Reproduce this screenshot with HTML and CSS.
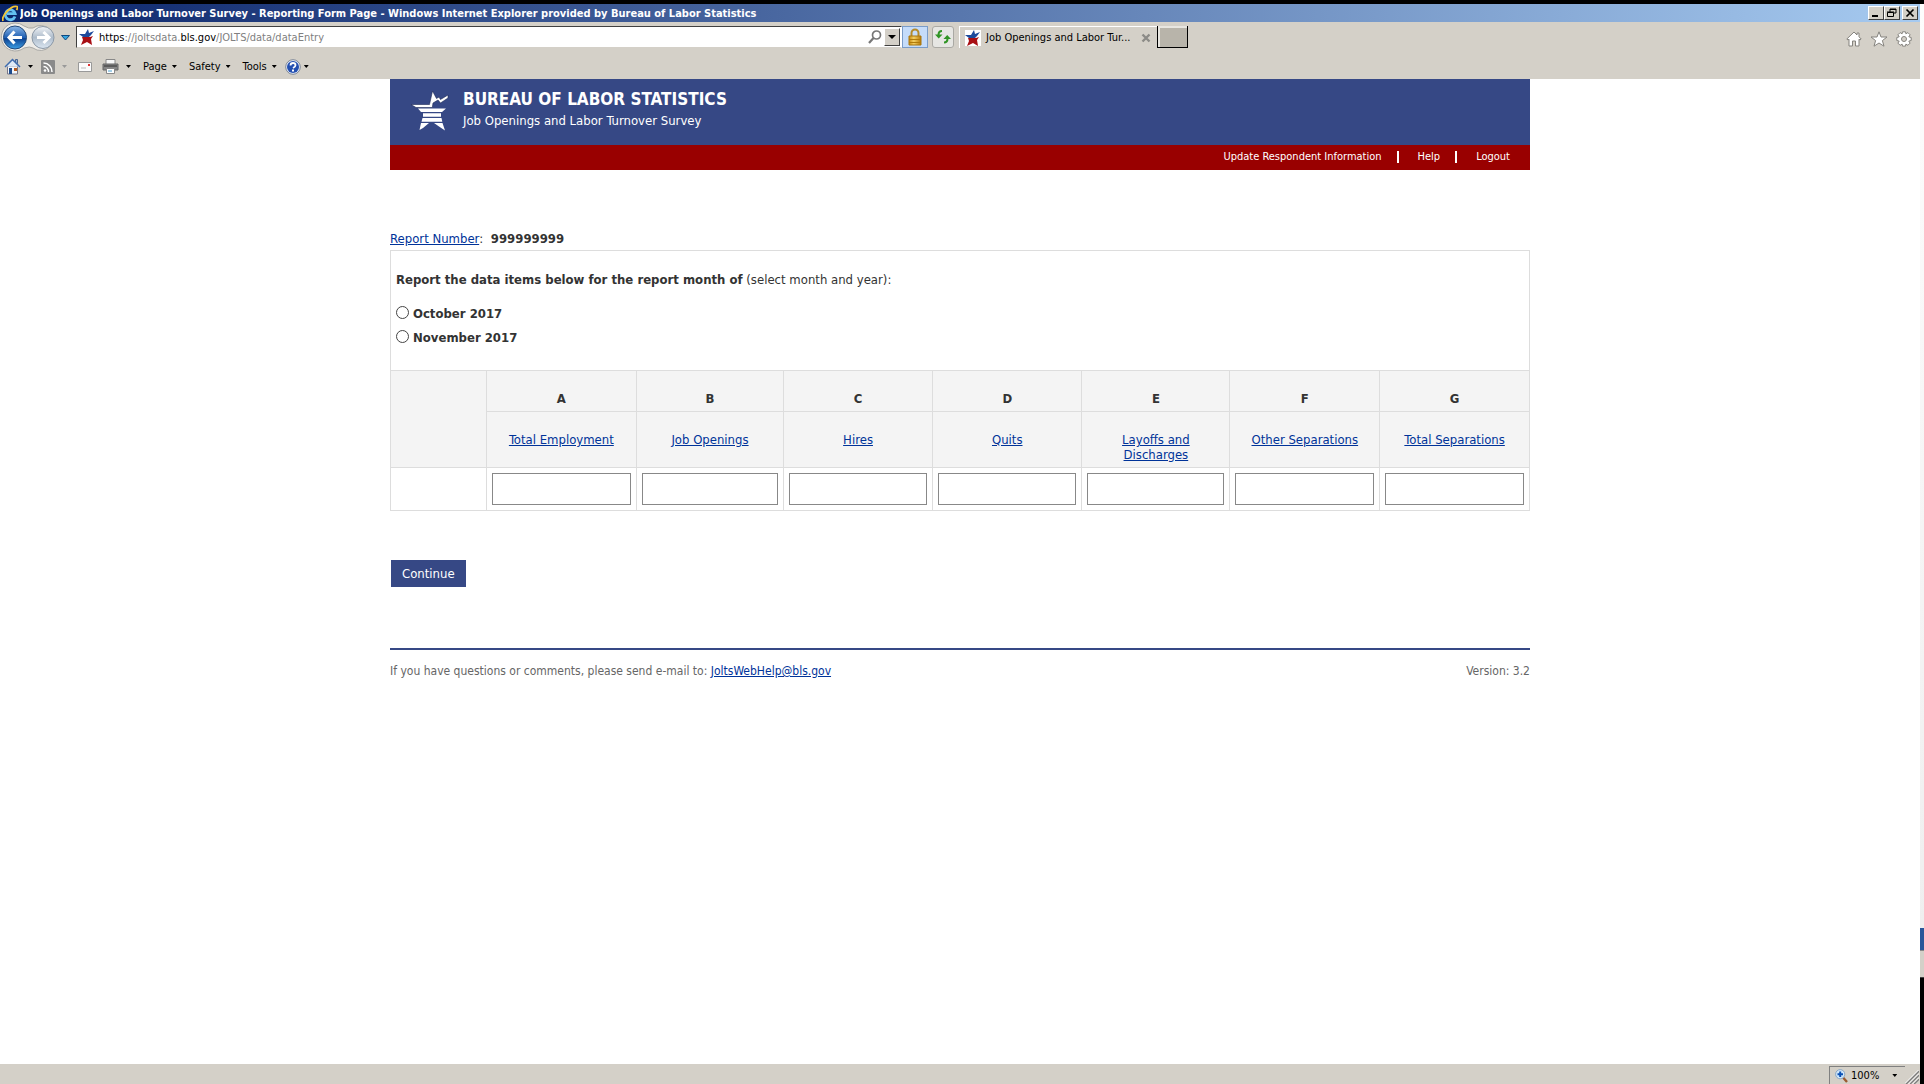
FILE: index.html
```html
<!DOCTYPE html>
<html lang="en">
<head>
<meta charset="utf-8">
<title>Job Openings and Labor Turnover Survey - Reporting Form Page</title>
<link rel="stylesheet" href="styles.css">
</head>
<body>
<svg width="0" height="0" class="defs" aria-hidden="true">
  <defs>
    <linearGradient id="blueBall" x1="0" y1="0" x2="0" y2="1"><stop offset="0" stop-color="#8db8e8"/><stop offset=".5" stop-color="#1f5fb4"/><stop offset=".55" stop-color="#0c4292"/><stop offset="1" stop-color="#3fa0e6"/></linearGradient>
    <linearGradient id="paleBall" x1="0" y1="0" x2="0" y2="1"><stop offset="0" stop-color="#f0f3f7"/><stop offset=".5" stop-color="#aebccb"/><stop offset="1" stop-color="#dbe6f1"/></linearGradient>
    <linearGradient id="gold" x1="0" y1="0" x2="1" y2="0"><stop offset="0" stop-color="#c98a12"/><stop offset=".4" stop-color="#f3cf62"/><stop offset="1" stop-color="#b87908"/></linearGradient>
    <symbol id="favicon" viewBox="0 0 16 16">
      <path fill="#fff" d="M0 0h16v16H0z"/>
      <path fill="#1d4a9c" d="M0 5h6l3-5 1 4 5-2-3 4-2 2H4z"/>
      <path fill="#a80f14" d="M3 8h8l3-1-2 3 1 6-5-3-6 3 2-5z"/>
    </symbol>
  </defs>
</svg>
<div class="window">
  <header class="titlebar">
    <svg class="ie" width="16" height="17" viewBox="0 0 16 17"><path d="M13 11.5A5 5 0 1 1 13.200 8.700H5" fill="none" stroke="#63c0f2" stroke-width="2.800"/><path d="M1 16C-1 11 9 0 15 1.500c1 .7.500 2-.5 3.500" fill="none" stroke="#f3c433" stroke-width="1.800"/></svg>
    <span class="caption">Job Openings and Labor Turnover Survey - Reporting Form Page - Windows Internet Explorer provided by Bureau of Labor Statistics</span>
    <div class="winbtns">
      <button class="winbtn" aria-label="Minimize"><svg width="12" height="10" viewBox="0 0 12 10"><path d="M2 7h6v2H2z"/></svg></button>
      <button class="winbtn" aria-label="Restore"><svg width="12" height="10" viewBox="0 0 12 10"><path d="M4 1h6v4H8M4 1.500h6M4 1v3" fill="none" stroke="#000"/><path d="M1.500 4.500h6v4h-6zM1 4h7" fill="none" stroke="#000"/></svg></button>
      <button class="winbtn close" aria-label="Close"><svg width="12" height="10" viewBox="0 0 12 10"><path d="M2.500 1.500l7 7M9.500 1.500l-7 7" stroke="#000" stroke-width="1.700"/></svg></button>
    </div>
  </header>

  <div class="addressrow">
    <svg class="nav" width="72" height="30" viewBox="0 0 72 30">
      <path d="M15 1a14 14 0 1 0 9 25q6-2 9 0A12.500 12.500 0 1 0 33 6q-4 1-9-2A14 14 0 0 0 15 1z" fill="#eeece8" stroke="#a9a8a5"/>
      <circle cx="15" cy="15.500" r="11.500" fill="url(#blueBall)" stroke="#234a7c"/>
      <path d="M22 15.500H9M14.500 9.500L9 15.500l5.500 6" fill="none" stroke="#fff" stroke-width="3"/>
      <circle cx="43" cy="15.500" r="11" fill="url(#paleBall)" stroke="#8b98a6"/>
      <path d="M37 15.500h12M43.500 10L49 15.500 43.500 21" fill="none" stroke="#fff" stroke-width="3"/>
      <path d="M61.500 13.500h8l-4 4.500z" fill="#35a5e0" stroke="#104a80"/>
    </svg>
    <div class="address">
      <svg width="16" height="16"><use href="#favicon"/></svg>
      <div class="url" role="textbox" aria-label="Address"><b>https</b>://joltsdata.<b>bls.gov</b>/JOLTS/data/dataEntry</div>
      <svg width="14" height="14" viewBox="0 0 14 14"><circle cx="8.500" cy="5" r="4" fill="none" stroke="#777" stroke-width="1.700"/><path d="M5.500 8L1 13" stroke="#777" stroke-width="2.200"/></svg>
      <button class="drop" aria-label="Show address list"><i class="caret wide"></i></button>
    </div>
    <button class="lock" aria-label="Security report"><svg width="16" height="18" viewBox="0 0 16 18"><path d="M4.500 8V5a3.500 3.500 0 0 1 7 0v3" fill="none" stroke="#b58a2a" stroke-width="2"/><path d="M2 8h12v9H2z" fill="url(#gold)" stroke="#a8770f"/><path d="M2 11.500h12M2 14.500h12" stroke="#b07b0c"/></svg></button>
    <button class="refresh" aria-label="Refresh"><svg width="16" height="16" viewBox="0 0 16 16"><path d="M7 2Q3.500 2 3.500 6M9 13.500q3.500 0 3.500-4" fill="none" stroke="#2f9424" stroke-width="2"/><path d="M0 5.500h7.500l-3.800 4zM8.500 10H16l-3.800-4z" fill="#2f9424"/></svg></button>
    <div class="tab">
      <svg width="16" height="16"><use href="#favicon"/></svg>
      <span>Job Openings and Labor Tur...</span>
      <button class="tabclose" aria-label="Close tab"><svg width="10" height="10" viewBox="0 0 10 10"><path d="M1.500 1.500l7 7M8.500 1.500l-7 7" stroke="#8c8b87" stroke-width="2.400"/></svg></button>
    </div>
    <button class="newtab" aria-label="New tab"></button>
    <div class="tools">
      <svg width="16" height="16" viewBox="0 0 16 16"><path d="M8 1L.8 8l1.200 1 1-.8V15h3.500v-5h3v5H13V8.200l1 .8 1.200-1L13 5.800V2h-2v2z" fill="#fff" stroke="#85837e"/></svg>
      <svg width="18" height="16" viewBox="0 0 18 16"><path d="M9 .8l2 5.200h6l-4.600 3.600L14 15.200 9 12l-5 3.200 1.600-5.600L1 6h6z" fill="#fff" stroke="#85837e"/></svg>
      <svg width="16" height="16" viewBox="0 0 16 16"><path d="M6.500.8h3l.4 2 2-1.200 2.200 2.200-1.300 2 2.400.7v3l-2.400.6 1.300 2-2.200 2.200-2-1.200-.4 2h-3l-.4-2-2 1.200-2.200-2.200 1.300-2-2.400-.6v-3l2.400-.7-1.300-2 2.200-2.200 2 1.200z" fill="#fff" stroke="#85837e"/><circle cx="8" cy="8" r="2.500" fill="#d4d0c8" stroke="#85837e"/></svg>
    </div>
  </div>

  <nav class="commandbar">
    <button aria-label="Home"><svg width="17" height="17" viewBox="0 0 17 17"><path d="M3.500 8h10v8h-10z" fill="#f2f6fb" stroke="#778"/><path d="M11.500 1.500h2v4h-2z" fill="#9db4d2" stroke="#4a6590"/><path d="M8.500 2L2 8.500h13z" fill="#dfe9f5"/><path d="M1 9l7.500-7.500L16 9" fill="none" stroke="#3f6cae" stroke-width="1.500"/><path d="M5 10h3v6H5z" fill="#1d4b8c"/><path d="M10 10h3v3h-3z" fill="#b45a1d"/></svg><i class="caret"></i></button>
    <button aria-label="Feeds"><svg width="14" height="14" viewBox="0 0 14 14"><rect width="14" height="14" rx="1" fill="#8a8a8a"/><circle cx="4" cy="10.500" r="1.300" fill="#fff"/><path d="M2.500 6.500a5 5 0 0 1 5 5.500M2.500 3a8.500 8.500 0 0 1 8.500 9" fill="none" stroke="#fff" stroke-width="1.500"/></svg><i class="caret off"></i></button>
    <button class="mail" aria-label="Read mail"><svg width="14" height="10" viewBox="0 0 14 10"><path d="M.5.5h13v9H.5z" fill="#fbfbfb" stroke="#999"/><path d="M10 2h2v2h-2z" fill="#d33"/><path d="M3 6h5" stroke="#bbb"/></svg></button>
    <button aria-label="Print"><svg width="17" height="15" viewBox="0 0 17 15"><path d="M4 .5h9V6H4z" fill="#f7f7f7" stroke="#888"/><path d="M1 5h15v6H1z" fill="#858585" stroke="#666"/><path d="M2 7h13" stroke="#333"/><path d="M4.500 9.500h8v5h-8z" fill="#fff" stroke="#888"/><path d="M6 12h4" stroke="#4aa0d0"/></svg><i class="caret"></i></button>
    <button class="menu">Page<i class="caret"></i></button>
    <button class="menu">Safety<i class="caret"></i></button>
    <button class="menu">Tools<i class="caret"></i></button>
    <button class="help" aria-label="Help"><svg width="16" height="16" viewBox="0 0 16 16"><circle cx="8" cy="8" r="7.300" fill="#e8eefa" stroke="#7d8797"/><circle cx="8" cy="8" r="6" fill="#234fb0"/><path d="M5.500 6.500Q5.500 4 8 4t2.500 2.200Q10.500 7.500 8 9" fill="none" stroke="#fff" stroke-width="1.800"/><path d="M7 10.500h2v2H7z" fill="#fff"/></svg><i class="caret"></i></button>
  </nav>

  <div class="viewport">
    <div class="page">
      <header class="banner">
        <svg width="40" height="42" viewBox="0 0 40 42">
          <path d="M1 14.500h18.500L22.500 1l4 7.500L29 7l1.500 2.500L38 5v3l-7.500 5-2.500-3-5 3-.7 4.500H6z" fill="#fff" stroke="#1c2856" stroke-width=".6"/>
          <path d="M8 18.500h28l-4 3.500H11zM13 23.300h18v3.400H13zM12.500 28h19l.8 3.700H11.500zM11 33h8l-6 5-3.500 2zM24 33h8.500l2.500 7.500-6-4z" fill="#fff"/>
        </svg>
        <div>
          <h1>BUREAU OF LABOR STATISTICS</h1>
          <p>Job Openings and Labor Turnover Survey</p>
        </div>
      </header>
      <nav class="links">
        <a href="#">Update Respondent Information</a>
        <a href="#">Help</a>
        <a href="#">Logout</a>
      </nav>

      <form class="form">
        <p class="report"><a href="#">Report Number</a>: <strong>999999999</strong></p>
        <div class="months" role="radiogroup" aria-labelledby="prompt">
          <p id="prompt"><strong>Report the data items below for the report month of</strong> (select month and year):</p>
          <label><input type="radio" name="month">October 2017</label>
          <label><input type="radio" name="month">November 2017</label>
        </div>
        <table class="data">
          <colgroup><col class="c0"><col class="c1"><col class="c2"><col class="c3"><col class="c3"><col class="c4"><col><col></colgroup>
          <thead>
            <tr><td rowspan="2"></td><th>A</th><th>B</th><th>C</th><th>D</th><th>E</th><th>F</th><th>G</th></tr>
            <tr>
              <td><a href="#" id="ha">Total Employment</a></td>
              <td><a href="#" id="hb">Job Openings</a></td>
              <td><a href="#" id="hc">Hires</a></td>
              <td><a href="#" id="hd">Quits</a></td>
              <td><a href="#" id="he">Layoffs and<br>Discharges</a></td>
              <td><a href="#" id="hf">Other Separations</a></td>
              <td><a href="#" id="hg">Total Separations</a></td>
            </tr>
          </thead>
          <tbody>
            <tr>
              <td></td>
              <td><input type="text" aria-labelledby="ha"></td>
              <td><input type="text" aria-labelledby="hb"></td>
              <td><input type="text" aria-labelledby="hc"></td>
              <td><input type="text" aria-labelledby="hd"></td>
              <td><input type="text" aria-labelledby="he"></td>
              <td><input type="text" aria-labelledby="hf"></td>
              <td><input type="text" aria-labelledby="hg"></td>
            </tr>
          </tbody>
        </table>
        <button type="button" class="continue">Continue</button>
      </form>

      <footer class="foot">
        <p>If you have questions or comments, please send e-mail to: <a href="mailto:JoltsWebHelp@bls.gov">JoltsWebHelp@bls.gov</a></p>
        <p>Version: 3.2</p>
      </footer>
    </div>
  </div>

  <div class="statusbar">
    <button class="zoom"><svg width="13" height="14" viewBox="0 0 13 14"><path d="M8 8.500l4 4.500" stroke="#9a5a30" stroke-width="2.400"/><circle cx="5.200" cy="5.200" r="4.600" fill="#cfe6fa" stroke="#8ba6c2"/><path d="M5.200 2.500v5.500M2.500 5.200H8" stroke="#0a50b4" stroke-width="2"/></svg>100%<i class="caret"></i></button>
    <svg class="grip" width="14" height="14" viewBox="0 0 14 14"><path d="M1 14L14 1M5 14l9-9M9 14l5-5" stroke="#808080" stroke-width="1.600"/><path d="M0 13.500L13.500 0M3.500 14L14 3.500M7.500 14L14 7.500" stroke="#fff"/></svg>
  </div>
</div>
<div class="edge"><i class="cap"></i><i class="space"></i><i class="blue"></i><i class="grey"></i><i class="black"></i></div>
</body>
</html>
```
FILE: styles.css
```css
* { box-sizing: border-box; }
body {
  margin: 0;
  min-height: 100vh;
  display: flex;
  background: #fff;
  color: #333;
  font: 13px/16px "DejaVu Sans Condensed", "DejaVu Sans", sans-serif;
}
p, h1 { margin: 0; }
svg { display: block; flex: none; }
.defs { position: absolute; }
button { font: inherit; color: inherit; margin: 0; padding: 0; border: 0; border-radius: 0; background: none; }
a { color: #039; }

/* Browser window */
.window { flex: 1; min-width: 0; display: flex; flex-direction: column; border-top: 4px solid #000; }
.titlebar {
  height: 18px;
  display: flex;
  align-items: center;
  gap: 2px;
  padding: 0 2px;
  background: linear-gradient(90deg, #0a246a, #a6caf0);
  color: #fff;
  font: bold 11px/18px "DejaVu Sans Condensed", "DejaVu Sans", sans-serif;
}
.caption { flex: 1; padding-top: 1px; white-space: nowrap; overflow: hidden; }
.winbtns { display: flex; }
.winbtn {
  width: 16px;
  height: 14px;
  padding: 1px;
  background: #d4d0c8;
  border: 1px solid;
  border-color: #fff #404040 #404040 #fff;
}
.winbtn.close { margin-left: 2px; }

.addressrow, .commandbar, .statusbar { background: #d4d0c8; color: #000; font-size: 11px; }
.addressrow { display: flex; align-items: center; height: 30px; }
.nav { margin-right: 4px; }
.address {
  flex: 0 1 826px;
  height: 22px;
  display: flex;
  align-items: center;
  padding: 0 1px 0 2px;
  background: #fff;
  border: 1px solid;
  border-color: #404040 #fff #d4d0c8 #404040;
}
.url { flex: 1; padding: 2px 0 0 4px; color: #808080; white-space: nowrap; }
.url b { font-weight: 400; color: #000; }
.drop {
  width: 16px;
  height: 18px;
  margin-left: 2px;
  display: flex;
  align-items: center;
  justify-content: center;
  background: #d4d0c8;
  border: 1px solid;
  border-color: #fff #404040 #404040 #fff;
}
.lock, .refresh { display: flex; align-items: center; justify-content: center; height: 22px; }
.lock { width: 26px; background: #c5dcfa; border: 1px solid #7a9cc8; }
.refresh { width: 22px; margin: 0 5px 0 4px; background: #e6e6e3; border: 1px solid #aaa9a4; border-radius: 3px; }
.tab {
  width: 198px;
  height: 22px;
  display: flex;
  align-items: center;
  gap: 5px;
  padding: 1px 6px 0 5px;
  border: 1px solid #fff;
  border-width: 1px 0 0 1px;
  white-space: nowrap;
}
.tab span { flex: 1; }
.newtab { width: 31px; height: 22px; background: #b8b4aa; border: 1px solid #000; border-width: 0 1px 1px 1px; box-shadow: inset 2px 2px 0 #e8e6e0; }
.tools { display: flex; gap: 8px; margin-left: auto; padding: 4px 8px 0 0; }

.commandbar { display: flex; align-items: center; height: 27px; padding: 2px 0 0 4px; }
.commandbar button { display: flex; align-items: center; gap: 7px; margin-right: 8px; }
.commandbar .mail { margin: 0 10px 0 3px; }
.commandbar .menu { gap: 5px; margin: 0 6px 0 4px; }
.commandbar .menu + .menu { margin-left: 6px; }
.commandbar .help { gap: 3px; margin-left: 2px; }
.caret { width: 5px; height: 3px; background: #000; clip-path: polygon(0 0, 100% 0, 50% 100%); }
.caret.wide { width: 8px; height: 4px; }
.caret.off { background: #999; }

.viewport { flex: 1; background: #fff; }
.statusbar { display: flex; justify-content: flex-end; height: 20px; padding-top: 2px; }
.zoom {
  display: flex;
  align-items: center;
  width: 76px;
  height: 18px;
  padding-left: 5px;
  gap: 3px;
  border: 1px solid #808080;
  border-width: 1px 0 0 1px;
}
.zoom .caret { margin-left: 10px; }
.grip { align-self: flex-end; margin-right: 1px; }

/* Strip of the desktop showing beside the window */
.edge { width: 4px; display: flex; flex-direction: column; }
.edge .cap { height: 4px; background: #000; }
.edge .space { flex: 1; background: linear-gradient(#fdfdfd, #efefef); }
.edge .blue { height: 22px; background: #2a579a; }
.edge .grey { height: 28px; background: #d4d0c8; border-top: 1px solid #888; border-bottom: 1px solid #404040; }
.edge .black { height: 106px; background: #000; }

/* Survey page */
.page { max-width: 1140px; margin: 0 auto; }
.banner { display: flex; gap: 13px; height: 66px; padding: 11px 20px; background: #364885; color: #fff; }
.banner h1 { font-size: 17px; line-height: 18px; }
.banner p { line-height: 26px; }
.links {
  display: flex;
  justify-content: flex-end;
  height: 25px;
  padding: 6px 20px 0 0;
  background: #900;
  font-size: 11px;
  line-height: 12px;
}
.links a { color: #fff; text-decoration: none; }
.links a + a { margin-left: 15px; padding-left: 19px; border-left: 2px solid #fff; height: 12px; }

.form { padding-top: 61px; }
.report strong { margin-left: 4px; }
.report { margin-bottom: 3px; }
.months { padding: 21px 5px 20px; border: 1px solid #ddd; border-bottom: 0; }
.months p { margin-bottom: 14px; }
.months label { display: flex; align-items: center; gap: 4px; height: 24px; font-weight: bold; }
.months input {
  appearance: none;
  width: 13px;
  height: 13px;
  margin: 0 0 4px;
  border: 1px solid #444;
  border-radius: 50%;
  background: #fff;
}
.data { width: 100%; table-layout: fixed; border-collapse: collapse; text-align: center; line-height: 15px; }
.data th, .data td { padding: 20px 5px 5px; border: 1px solid #ddd; vertical-align: top; }
.data thead { background: #f4f4f4; }
.data tbody td { padding: 5px; }
.data input { display: block; width: 100%; height: 32px; border: 1px solid #888; background: #fff; }
.c0 { width: 8.4%; }
.c1 { width: 13.2%; }
.c2 { width: 12.9%; }
.c3 { width: 13.1%; }
.c4 { width: 13%; }
.continue { display: block; height: 27px; margin: 49px 1px 61px; padding: 0 11px; background: #364885; color: #fff; }

.foot {
  display: flex;
  justify-content: space-between;
  padding-top: 13px;
  border-top: 2px solid #364885;
  color: #666;
  font-size: 12px;
}
```
